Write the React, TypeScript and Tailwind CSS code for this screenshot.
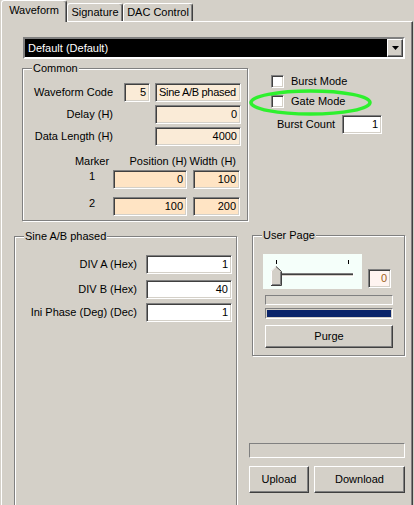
import React from "react";

const sunken =
  "border border-t-[#808080] border-l-[#808080] border-b-white border-r-white shadow-[inset_1px_1px_0_#404040,inset_-1px_-1px_0_#d4d0c8]";
const raised =
  "border border-t-white border-l-white border-r-[#404040] border-b-[#404040] shadow-[inset_-1px_-1px_0_#808080] bg-[#d4d0c8]";
const thin = "border border-t-[#808080] border-l-[#808080] border-b-white border-r-white";

function Field({ className, value }: { className: string; value: string }) {
  return (
    <div className={`flex h-[19px] items-center justify-end pr-[3px] leading-none whitespace-nowrap overflow-hidden ${sunken} ${className}`}>
      {value}
    </div>
  );
}

function Group({ title, className, children }: { title: string; className: string; children?: React.ReactNode }) {
  return (
    <div className={`relative border border-[#808080] shadow-[inset_1px_1px_0_#fff,1px_1px_0_#fff] ${className}`}>
      <span className="absolute left-[9px] -top-[7px] bg-[#d4d0c8] px-px leading-[13px]">{title}</span>
      {children}
    </div>
  );
}

function Tab({ label, active, className }: { label: string; active?: boolean; className: string }) {
  return (
    <div
      className={`flex justify-center rounded-t-[3px] border-l border-t border-l-white border-t-white border-r border-r-[#404040] shadow-[inset_-1px_0_0_#808080] bg-[#d4d0c8] leading-[13px] ${
        active ? "relative z-10 -mb-px h-[22px] pt-[3px]" : "h-[18px] pt-[2px]"
      } ${className}`}
    >
      {label}
    </div>
  );
}

function Checkbox() {
  return <div className={`h-[13px] w-[13px] bg-white ${sunken}`} />;
}

function Slider() {
  return (
    <svg width="99" height="35" viewBox="0 0 99 35" className="block">
      <rect x="0" y="0" width="99" height="35" fill="#f5fffa" />
      <rect x="13" y="6" width="1" height="4" fill="#000" />
      <rect x="85" y="6" width="1" height="4" fill="#000" />
      <rect x="14" y="19" width="76" height="1" fill="#808080" />
      <rect x="14" y="20" width="76" height="1" fill="#404040" />
      <rect x="14" y="21" width="76" height="1" fill="#d4d0c8" />
      <rect x="14" y="22" width="77" height="1" fill="#fff" />
      <rect x="90" y="19" width="1" height="3" fill="#fff" />
      <polygon points="8,17 13,12 18,17 18,31 8,31" fill="#d4d0c8" />
      <polyline points="8.5,31 8.5,17 13,12.5" fill="none" stroke="#fff" strokeWidth="1" />
      <polyline points="13,12.5 18.5,17.5 18.5,31.5 8,31.5" fill="none" stroke="#404040" strokeWidth="1" />
      <polyline points="17.5,18 17.5,30.5 9,30.5" fill="none" stroke="#808080" strokeWidth="1" />
    </svg>
  );
}

export default function App() {
  return (
    <div className="h-[505px] w-[414px] overflow-hidden bg-[#d4d0c8] font-['Liberation_Sans',Arial,sans-serif] text-[11px] text-black">
      {/* tab strip */}
      <div className="flex h-[21px] items-end pl-px">
        <Tab label="Waveform" active className="w-[66px]" />
        <Tab label="Signature" className="w-[56px]" />
        <Tab label="DAC Control" className="w-[70px]" />
      </div>

      <div className="ml-px h-[500px] w-[412px] border-l border-t border-l-white border-t-white border-r border-r-[#404040] shadow-[inset_-1px_0_0_#808080]">
        {/* preset combo */}
        <div className={`ml-[21px] mt-[15px] flex h-[22px] w-[382px] ${sunken} border-2 border-t-[#808080] border-l-[#808080] shadow-none`}>
          <div className="flex flex-1 items-center bg-black pl-[3px] leading-none text-white">Default (Default)</div>
          <div className={`flex h-full w-[16px] items-center justify-center ${raised}`}>
            <svg width="7" height="4" viewBox="0 0 7 4">
              <polygon points="0,0 7,0 3.5,4" fill="#000" />
            </svg>
          </div>
        </div>

        <div className="flex">
          <Group title="Common" className="ml-[20px] mt-[9px] h-[153px] w-[226px]">
            <div className="mt-[14px] flex items-center">
              <span className="w-[90px] text-right">Waveform Code</span>
              <Field className="ml-[11px] w-[26px] bg-[#faebd7]" value="5" />
              <Field className="ml-[5px] w-[86px] justify-start pl-[3px] tracking-[-0.3px] bg-[#faebd7]" value="Sine A/B phased" />
            </div>
            <div className="mt-[3px] flex items-center">
              <span className="w-[90px] text-right">Delay (H)</span>
              <Field className="ml-[42px] w-[86px] bg-[#faebd7]" value="0" />
            </div>
            <div className="mt-[3px] flex items-center">
              <span className="w-[90px] text-right">Data Length (H)</span>
              <Field className="ml-[42px] w-[86px] bg-[#faebd7]" value="4000" />
            </div>
            <div className="mt-[9px] flex items-end leading-[13px] whitespace-nowrap">
              <span className="ml-[52px] flex w-[34px] justify-center">Marker</span>
              <span className="ml-[4px] flex w-[74px] justify-end">Position (H)</span>
              <span className="ml-[6px] flex w-[47px] justify-end pr-[4px]">Width (H)</span>
            </div>
            <div className="mt-[2px] flex items-start leading-[13px]">
              <span className="ml-[52px] w-[34px] text-center">1</span>
              <Field className="ml-[4px] w-[74px] bg-[#ffe4c4]" value="0" />
              <Field className="ml-[6px] w-[47px] bg-[#ffe4c4]" value="100" />
            </div>
            <div className="mt-[8px] flex items-start leading-[13px]">
              <span className="ml-[52px] w-[34px] text-center">2</span>
              <Field className="ml-[4px] w-[74px] bg-[#ffe4c4]" value="100" />
              <Field className="ml-[6px] w-[47px] bg-[#ffe4c4]" value="200" />
            </div>
          </Group>

          <div className="relative w-[160px]">
            <div className="ml-[23px] mt-[16px] flex items-center gap-[7px]">
              <Checkbox />
              <span className="leading-none">Burst Mode</span>
            </div>
            <div className="ml-[23px] mt-[7px] flex items-center gap-[7px]">
              <Checkbox />
              <span className="leading-none">Gate Mode</span>
            </div>
            <div className="mt-[7px] flex items-center">
              <span className="ml-[29px] w-[65px]">Burst Count</span>
              <Field className="w-[40px] bg-white" value="1" />
            </div>
            {/* highlight drawn over the Gate Mode option */}
            <svg className="absolute left-px top-[30px]" width="123" height="27" viewBox="0 0 123 27">
              <ellipse cx="61.5" cy="13.5" rx="59.5" ry="11.5" fill="none" stroke="#2ef02e" strokeWidth="3.5" />
            </svg>
          </div>
        </div>

        <div className="flex items-start">
          <Group title="Sine A/B phased" className="ml-[12px] mt-[15px] h-[290px] w-[223px]">
            <div className="mt-[18px] flex items-center">
              <span className="w-[122px] text-right">DIV A (Hex)</span>
              <Field className="ml-[9px] w-[86px] bg-white" value="1" />
            </div>
            <div className="mt-[6px] flex items-center">
              <span className="w-[122px] text-right">DIV B (Hex)</span>
              <Field className="ml-[9px] w-[86px] bg-white" value="40" />
            </div>
            <div className="mt-[4px] flex items-center">
              <span className="w-[122px] text-right">Ini Phase (Deg) (Dec)</span>
              <Field className="ml-[9px] w-[86px] bg-white" value="1" />
            </div>
          </Group>

          <div className="ml-[12px] mt-[14px] flex w-[156px] flex-col">
            <Group title="User Page" className="ml-[3px] h-[121px] w-[153px]">
              <div className="ml-[10px] mt-[18px] flex items-end">
                <Slider />
                <Field className="mb-px ml-[6px] w-[23px] bg-[#fff4f0] text-[#a0601c]" value="0" />
              </div>
              <div className={`ml-[12px] mt-[6px] h-[10px] w-[128px] ${thin}`} />
              <div className={`ml-[12px] mt-[3px] h-[11px] w-[128px] p-px ${thin}`}>
                <div className="h-full w-full bg-[#0a246a]" />
              </div>
              <div className={`ml-[12px] mt-[6px] flex h-[23px] w-[128px] items-center justify-center ${raised}`}>Purge</div>
            </Group>

            <div className={`mt-[87px] h-[15px] w-[156px] ${thin}`} />
            <div className="mt-[8px] flex">
              <div className={`flex h-[27px] w-[60px] items-center justify-center ${raised}`}>Upload</div>
              <div className={`ml-[5px] flex h-[27px] w-[91px] items-center justify-center ${raised}`}>Download</div>
            </div>
          </div>
        </div>
      </div>
    </div>
  );
}
